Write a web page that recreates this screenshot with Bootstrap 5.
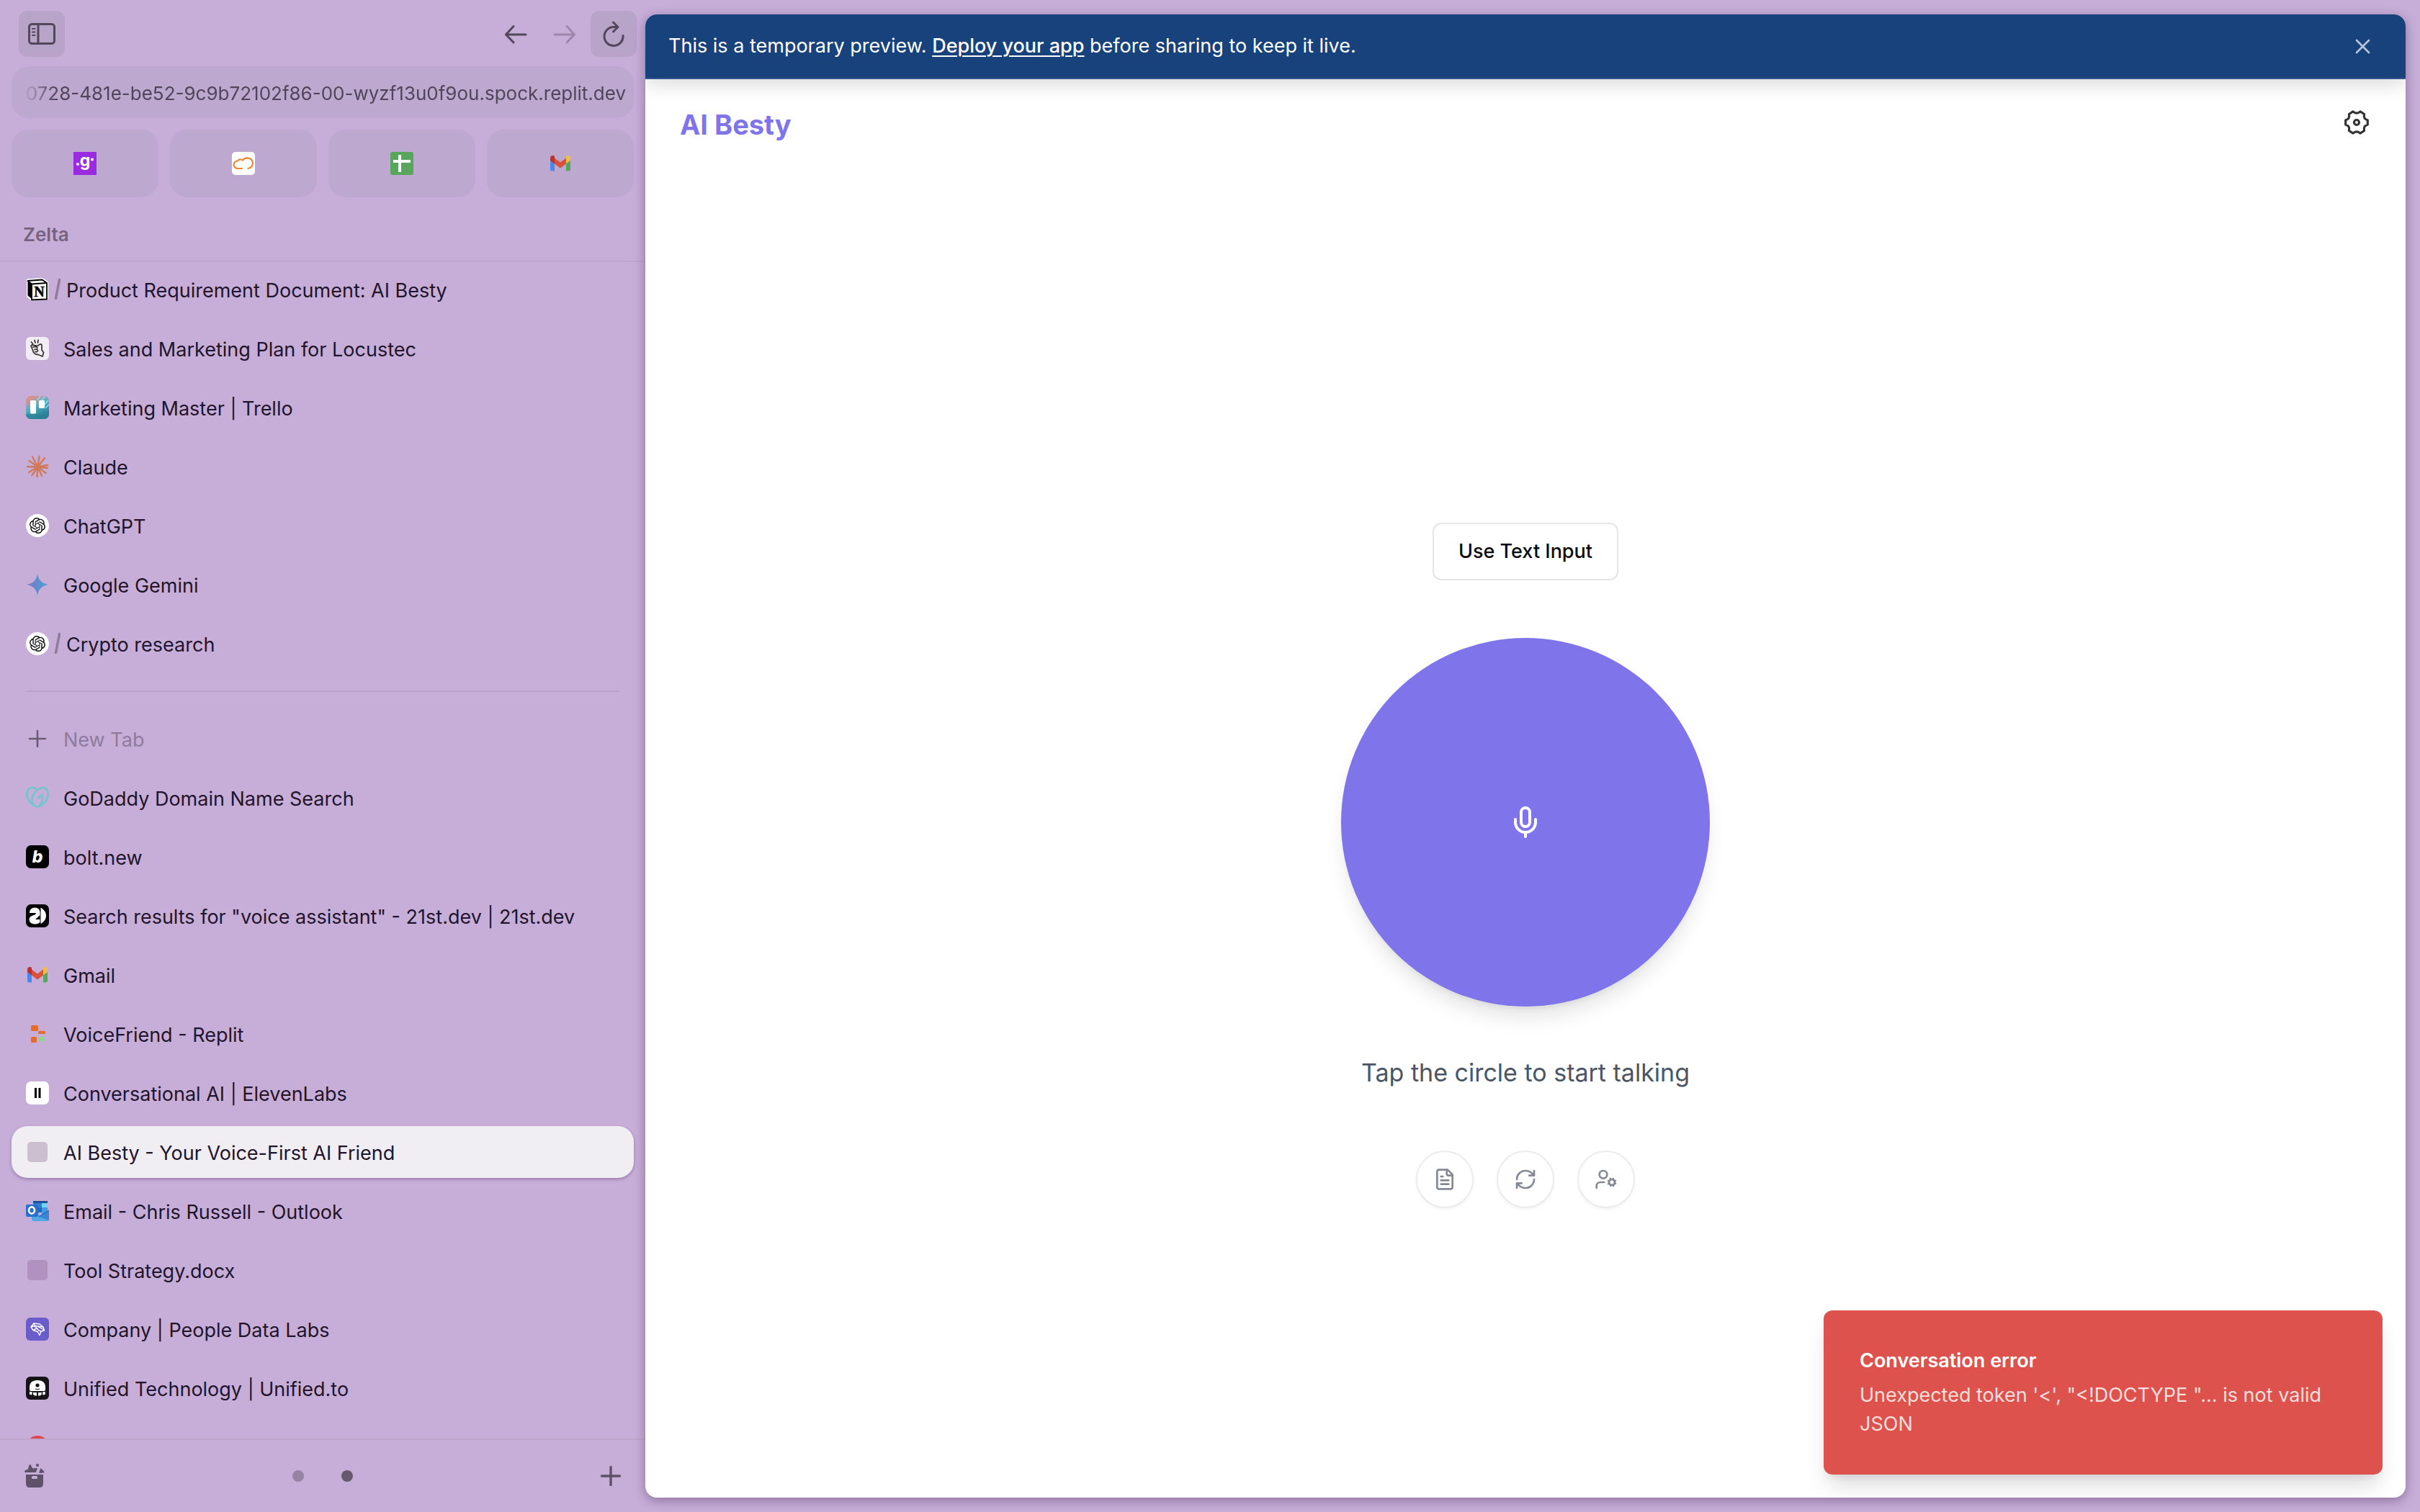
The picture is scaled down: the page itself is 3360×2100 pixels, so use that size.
<!DOCTYPE html>
<html lang="en">
<head>
<meta charset="utf-8">
<meta name="viewport" content="width=device-width, initial-scale=1">
<title>AI Besty - Your Voice-First AI Friend</title>
<link href="https://cdn.jsdelivr.net/npm/bootstrap@5.3.0/dist/css/bootstrap.min.css" rel="stylesheet">
<style>
  body { font-family: Inter, "Liberation Sans", sans-serif; font-size: 27px; line-height: 40px; color: #22142a; background: #c7aed9; }
  button, input { font: inherit; color: inherit; }
  svg { display: block; flex: none; }
  .shell { height: 100vh; }

  /* Browser sidebar */
  .side { flex: 0 0 896px; min-width: 0; }
  .side-tools { padding: 15px 12px 13px 26px; height: 92px; }
  .tool { width: 64px; height: 64px; border: 0; border-radius: 12px; background: transparent; color: #53475b; padding: 0; }
  .tool.filled { background: #b8a3c9; }
  .tool.faded { color: #9d87ab; }
  .side-pad { padding: 0 16px; }
  .address { height: 72px; border-radius: 24px; background: #bda8cf; }
  .address input { width: 100%; height: 72px; border: 0; outline: 0; background: transparent; text-align: right; padding: 2px 11px 0 0; font-size: 26px; color: #51455b;
    -webkit-mask-image: linear-gradient(to right, transparent 16px, #000 60px); mask-image: linear-gradient(to right, transparent 16px, #000 60px); }
  .pins { gap: 16px; padding-top: 16px; }
  .pin { flex: 1 1 0; height: 94px; border-radius: 24px; background: #bda8cf; }
  .space-name { height: 88px; padding: 16px 32px 0; font-size: 26px; font-weight: 600; color: #74637f; }
  .tabs { border-top: 2px solid #bca6cc; border-bottom: 2px solid #bca6cc; flex: 1 1 0; min-height: 0; overflow: hidden; padding: 2px 16px 0; }
  .tab-list { display: grid; gap: 10px; }
  .tab-row { height: 72px; padding: 0 20px; border-radius: 22px; color: #22142a; text-decoration: none; white-space: nowrap; }
  .tab-row span { margin-left: 20px; padding-top: 3px; }
  .tab-row .slash + span { margin-left: 7px; }
  .slash { margin-left: 7px; }
  .tab-row.current { background: #f0edf3; box-shadow: 0 2px 4px rgba(60, 30, 80, .35); }
  .tab-row.new { color: #8f7b9b; }
  .tab-split { height: 2px; margin: 29px 20px; background: #b9a2ca; }
  .side-foot { height: 100px; padding: 0 28px; }
  .foot-btn { border: 0; background: transparent; padding: 0; width: 40px; height: 40px; color: #5f5268; }
  .dots { gap: 52px; }
  .dots button { width: 16px; height: 16px; border: 0; border-radius: 50%; padding: 0; background: #9783a4; }
  .dots .on { background: #65586f; }

  /* Web page */
  .view { flex: 1 1 0; min-width: 0; margin: 20px 20px 20px 0; border-radius: 16px; background: #fff; overflow: hidden; box-shadow: 0 4px 16px rgba(50, 25, 70, .4); }
  .banner { height: 90px; padding: 0 42px 0 32px; background: #18427c; border-bottom: 2px solid #2f5290; color: #fff; box-shadow: 0 8px 24px rgba(0, 0, 0, .14); }
  .banner a { color: #fff; font-weight: 500; text-decoration: underline; text-decoration-thickness: 2px; text-underline-offset: 4px; }
  .ghost { border: 0; background: transparent; padding: 0; width: 36px; height: 36px; color: #b9c6da; }
  .app-head { height: 120px; padding: 0 46px 0 48px; }
  .brand { font-size: 38px; font-weight: 700; line-height: 56px; color: #7f74e9; margin: 0; padding-top: 6px; }
  .gear { width: 44px; height: 44px; color: #333; border: 0; background: transparent; padding: 2px; }
  .stage { padding-top: 94px; }
  .text-btn { height: 80px; padding: 0 34px; border: 2px solid #e5e5e5; border-radius: 12px; background: #fff; color: #0b0b0b; font-weight: 500; }
  .orb { width: 512px; height: 512px; margin-top: 80px; border: 0; border-radius: 50%; background: #7f74e9; color: #fff; box-shadow: 0 20px 30px -6px rgba(0, 0, 0, .11), 0 8px 12px -8px rgba(0, 0, 0, .1); }
  .hint { margin: 64px 0 80px; font-size: 34px; line-height: 56px; color: #4b5563; }
  .round-row { gap: 32px; }
  .round-btn { width: 80px; height: 80px; border: 2px solid #ececec; border-radius: 50%; background: #fff; color: #848a94; padding: 0; box-shadow: 0 2px 4px rgba(0, 0, 0, .05); }
  .alert-box { position: absolute; right: 32px; bottom: 32px; width: 776px; padding: 50px; border-radius: 12px; background: #dd524c; color: #fff; box-shadow: 0 20px 30px -6px rgba(0, 0, 0, .15), 0 8px 12px -8px rgba(0, 0, 0, .1); }
  .alert-box strong { display: block; font-weight: 600; margin-bottom: 8px; }
  .alert-box p { margin: 0; color: #f9dedd; }
</style>
<script src="https://cdn.jsdelivr.net/npm/bootstrap@5.3.0/dist/js/bootstrap.bundle.min.js"></script>
</head>
<body>
<svg width="0" height="0" class="position-absolute" aria-hidden="true">
  <defs>
    <linearGradient id="gem"><stop offset="0" stop-color="#8575bd"/><stop offset="1" stop-color="#3fa3dc"/></linearGradient>
    <linearGradient id="tre" x1="0" y1="0" x2=".5" y2="1"><stop offset="0" stop-color="#f08c68"/><stop offset=".3" stop-color="#b99aa8"/><stop offset=".5" stop-color="#52b5c6"/><stop offset="1" stop-color="#257d92"/></linearGradient>
    <symbol id="i-gmail" viewBox="0 0 32 32">
      <path d="M2 9v15.500q0 2 2 2h4V14z" fill="#4b87f0"/><path d="M30 9v15.500q0 2-2 2h-4V14z" fill="#55a65a"/>
      <path d="M8 8.500l8 6 8-6v8l-8 6-8-6z" fill="#d9503f"/>
      <path d="M2 9q0-4 3.500-4Q7 5 8 6v10.500L2 12z" fill="#b8332c"/><path d="M30 9q0-4-3.500-4Q25 5 24 6v10.500l6-4.500z" fill="#f2bd42"/>
    </symbol>
    <symbol id="i-gpt" viewBox="0 0 32 32">
      <circle cx="16" cy="16" r="16" fill="#fff"/>
      <g transform="translate(5 5) scale(.917)"><path fill="#111" d="M22.282 9.821a5.985 5.985 0 0 0-.516-4.910 6.046 6.046 0 0 0-6.510-2.900A6.065 6.065 0 0 0 4.981 4.182a5.985 5.985 0 0 0-3.998 2.900 6.046 6.046 0 0 0 .743 7.097 5.980 5.980 0 0 0 .510 4.911 6.051 6.051 0 0 0 6.515 2.900A5.985 5.985 0 0 0 13.260 24a6.056 6.056 0 0 0 5.772-4.206 5.990 5.990 0 0 0 3.998-2.900 6.056 6.056 0 0 0-.747-7.073zM13.260 22.430a4.476 4.476 0 0 1-2.876-1.040l.141-.081 4.779-2.758a.795.795 0 0 0 .393-.681v-6.737l2.020 1.169a.071.071 0 0 1 .038.052v5.583a4.504 4.504 0 0 1-4.495 4.493zM3.600 18.304a4.471 4.471 0 0 1-.535-3.014l.142.085 4.783 2.759a.771.771 0 0 0 .781 0l5.843-3.369v2.332a.080.080 0 0 1-.033.062L9.740 19.950a4.500 4.500 0 0 1-6.140-1.646zM2.341 7.896a4.485 4.485 0 0 1 2.366-1.973V11.600a.766.766 0 0 0 .388.676l5.814 3.355-2.020 1.168a.076.076 0 0 1-.071 0l-4.830-2.786A4.504 4.504 0 0 1 2.341 7.872zm16.596 3.856l-5.833-3.387L15.119 7.200a.076.076 0 0 1 .071 0l4.830 2.791a4.494 4.494 0 0 1-.676 8.105v-5.678a.790.790 0 0 0-.407-.667zm2.010-3.023l-.141-.085-4.774-2.782a.776.776 0 0 0-.785 0L9.409 9.230V6.897a.066.066 0 0 1 .028-.061l4.830-2.787a4.500 4.500 0 0 1 6.680 4.660zm-12.640 4.135l-2.020-1.164a.080.080 0 0 1-.038-.057V6.075a4.500 4.500 0 0 1 7.375-3.453l-.142.080L8.704 5.460a.795.795 0 0 0-.393.681zm1.097-2.365l2.602-1.500 2.607 1.500v2.999l-2.597 1.500-2.607-1.500z"/></g>
    </symbol>
    <symbol id="i-slash" viewBox="0 0 10 32"><path d="M7.500 2.500L2.500 28.500" stroke="#8f7b9b" stroke-width="3.500" stroke-linecap="round"/></symbol>
    <symbol id="i-blank" viewBox="0 0 32 32"><rect x="2" y="2" width="28" height="28" rx="5" fill="currentColor"/></symbol>
  </defs>
</svg>

<div class="shell d-flex overflow-hidden">
  <aside class="side d-flex flex-column">
    <div class="side-tools d-flex align-items-center">
      <button class="tool filled d-flex align-items-center justify-content-center me-auto" type="button" aria-label="Toggle sidebar">
        <svg width="40" height="32" viewBox="0 0 40 32" fill="none" stroke="currentColor" stroke-width="3"><rect x="2.500" y="2.500" width="35" height="27" rx="4"/><path d="M15 3v26"/><path d="M7 9h3.500M7 13.500h3.500M7 18h3.500" stroke-width="2" stroke-linecap="round"/></svg>
      </button>
      <button class="tool d-flex align-items-center justify-content-center" type="button" aria-label="Back">
        <svg width="32" height="28" viewBox="0 0 32 28" fill="none" stroke="currentColor" stroke-width="3" stroke-linecap="round" stroke-linejoin="round"><path d="M30 15H2.500M13 3.500L2.500 15 13 26"/></svg>
      </button>
      <button class="tool faded d-flex align-items-center justify-content-center mx-1" type="button" aria-label="Forward">
        <svg width="32" height="28" viewBox="0 0 32 28" fill="none" stroke="currentColor" stroke-width="3" stroke-linecap="round" stroke-linejoin="round"><path d="M2 15h27.500M19 3.500L29.500 15 19 26"/></svg>
      </button>
      <button class="tool filled d-flex align-items-center justify-content-center" type="button" aria-label="Reload">
        <svg width="32" height="36" viewBox="0 0 32 36" fill="none" stroke="currentColor" stroke-width="3" stroke-linecap="round" stroke-linejoin="round"><path d="M29 20.500A13 13 0 1 1 16 8.500h5.500M15.500 2l6.500 6.500-6.500 6.500"/></svg>
      </button>
    </div>
    <div class="side-pad">
      <div class="address"><input type="text" aria-label="Address" readonly value="0728-481e-be52-9c9b72102f86-00-wyzf13u0f9ou.spock.replit.dev"></div>
      <div class="pins d-flex">
        <a class="pin d-flex align-items-center justify-content-center" href="#" aria-label="G workspace">
          <svg width="32" height="32" viewBox="0 0 32 32"><path d="M0 0h32v32H0z" fill="#9a2be0"/><text x="16" y="20" font-family="Inter" font-size="23" font-weight="700" fill="#fff" text-anchor="middle">g</text><circle cx="6" cy="17" r="2" fill="#fff"/><circle cx="26" cy="10.500" r="2" fill="#fff"/></svg>
        </a>
        <a class="pin d-flex align-items-center justify-content-center" href="#" aria-label="Cloud console">
          <svg width="32" height="32" viewBox="0 0 32 32"><rect width="32" height="32" rx="5" fill="#fff"/><path d="M14 23H8q-5-.5-5.500-5 0-5 5.500-5.500 1.500-2.500 4.500-2 1.500 0 2.500 1 2-3 6-3.200 7 .2 8 7 .2 6-6.500 7.700" fill="none" stroke="#ee8533" stroke-width="2.200" stroke-linecap="round"/></svg>
        </a>
        <a class="pin d-flex align-items-center justify-content-center" href="#" aria-label="Sheets">
          <svg width="32" height="32" viewBox="0 0 32 32"><rect width="32" height="32" rx="3" fill="#58a65c"/><path d="M4 11h24v4H4zM11 4h4v24h-4z" fill="#fff"/></svg>
        </a>
        <a class="pin d-flex align-items-center justify-content-center" href="#" aria-label="Gmail pinned">
          <svg width="32" height="32"><use href="#i-gmail"/></svg>
        </a>
      </div>
    </div>
    <div class="space-name d-flex align-items-center">Zelta</div>

    <nav class="tabs" aria-label="Tabs">
      <div class="tab-list">
        <a class="tab-row d-flex align-items-center" href="#">
          <svg width="32" height="32" viewBox="0 0 32 32"><path d="M1 1.500L23 0l8 5.500v24L8 32l-7-6z" fill="#fff"/><path d="M2.500 4.500l6 4v21l-6-5z"/><path d="M2.500 4l20-1.500L29 7v22.500L8 30.500V8.500z" fill="none" stroke="#000" stroke-width="1.800" stroke-linejoin="round"/><path d="M8 8.500L29 7" stroke="#000" stroke-width="1.800"/><text x="18.500" y="25.500" font-family="Liberation Serif" font-size="20" font-weight="700" text-anchor="middle" stroke="#000" stroke-width=".6">N</text></svg>
          <svg class="slash" width="10" height="32"><use href="#i-slash"/></svg><span>Product Requirement Document: AI Besty</span></a>
        <a class="tab-row d-flex align-items-center" href="#">
          <svg width="32" height="32" viewBox="0 0 32 32"><rect width="32" height="32" rx="6" fill="#f2edf5"/><path d="M7.500 7l2 2.500M12 4.500l1 3.500M17 4.500l-.5 3.500M8 14.500q-2-2 .5-3.500l7 1.500 4.500-2.500q2.500 0 2 3v5l2.500 3.500-1.500 5.500-6-2.500q-6-.5-7-4.500-1-3-2-5.500zM10 14q4-1 6 1M12 17.500q3-1.500 4.500 1-.5 3-3.500 2" fill="none" stroke="#3a3735" stroke-width="1.800" stroke-linecap="round" stroke-linejoin="round"/></svg>
          <span>Sales and Marketing Plan for Locustec</span></a>
        <a class="tab-row d-flex align-items-center" href="#">
          <svg width="32" height="32" viewBox="0 0 32 32"><rect width="32" height="32" rx="7" fill="url(#tre)"/><path d="M16 6L20 0M22 6l4-5.500M26 12l5-6M27 17l5-5" stroke="#8fdfe8" stroke-width="1.500"/><path d="M0 25h32v0q0 7-7 7H7q-7 0-7-7z" fill="#2f8296" opacity=".7"/><rect x="6" y="6" width="8" height="18.500" rx="1.500" fill="#fff"/><rect x="18" y="6" width="8" height="11" rx="1.500" fill="#fff"/></svg>
          <span>Marketing Master | Trello</span></a>
        <a class="tab-row d-flex align-items-center" href="#">
          <svg width="32" height="32" viewBox="0 0 32 32" stroke="#cf7a5c" stroke-width="2.400" stroke-linecap="round"><path d="M16.500 16.500L9 2.500M16.500 16.500L18.500 2M16.500 16.500L26 4M16.500 16.500L30 14M16.500 16.500L30 18M16.500 16.500L27.500 25M16.500 16.500L22 29M16.500 16.500L15.500 30M16.500 16.500L8.500 28M16.500 16.500L4 24M16.500 16.500L2 16M16.500 16.500L4.500 8"/><circle cx="16.500" cy="16.500" r="3" fill="#cf7a5c"/></svg>
          <span>Claude</span></a>
        <a class="tab-row d-flex align-items-center" href="#"><svg width="32" height="32"><use href="#i-gpt"/></svg><span>ChatGPT</span></a>
        <a class="tab-row d-flex align-items-center" href="#">
          <svg width="32" height="32" viewBox="0 0 32 32"><path d="M16 1q2 13 15 15-13 2-15 15-2-13-15-15 13-2 15-15z" fill="url(#gem)"/></svg>
          <span>Google Gemini</span></a>
        <a class="tab-row d-flex align-items-center" href="#"><svg width="32" height="32"><use href="#i-gpt"/></svg><svg class="slash" width="10" height="32"><use href="#i-slash"/></svg><span>Crypto research</span></a>
      </div>
      <div class="tab-split"></div>
      <div class="tab-list">
        <a class="tab-row new d-flex align-items-center" href="#">
          <svg width="32" height="32" viewBox="0 0 32 32"><path d="M16 5v22M5 16h22" stroke="#6b5c76" stroke-width="2.600" stroke-linecap="round"/></svg>
          <span>New Tab</span></a>
        <a class="tab-row d-flex align-items-center" href="#">
          <svg width="32" height="32" viewBox="0 0 32 32" fill="none" stroke="#75c4cf" stroke-width="2.800" stroke-linecap="round" stroke-linejoin="round"><path d="M16 5Q9-.5 4 3.500-.5 9 2.500 17 6.500 26 16 28.500 25.500 26 29.500 17 32.500 9 28 3.500 22.500-.5 16 5 8 11.500 8.500 20q.500 5 4 7.500M23 12l-6 4M23 12q.5 9-4 15"/></svg>
          <span>GoDaddy Domain Name Search</span></a>
        <a class="tab-row d-flex align-items-center" href="#">
          <svg width="32" height="32" viewBox="0 0 32 32"><rect width="32" height="32" rx="7"/><text x="16" y="23.500" font-family="Inter" font-size="23" font-weight="800" font-style="italic" fill="#fff" text-anchor="middle">b</text></svg>
          <span>bolt.new</span></a>
        <a class="tab-row d-flex align-items-center" href="#">
          <svg width="32" height="32" viewBox="0 0 32 32"><rect width="32" height="32" rx="7"/><path d="M5 12Q5 5 12 4.500q7 0 7.500 6v14q-1.500 3-7 3Q5 27 4.500 21q0-4 5-5.500 4-1 4.500-3.500H5z" fill="#fff"/><path d="M20.500 4.500Q28 9 28 16t-7.500 11z" fill="#fff"/><path d="M13 21h6.500v-6z"/></svg>
          <span>Search results for "voice assistant" - 21st.dev | 21st.dev</span></a>
        <a class="tab-row d-flex align-items-center" href="#"><svg width="32" height="32"><use href="#i-gmail"/></svg><span>Gmail</span></a>
        <a class="tab-row d-flex align-items-center" href="#">
          <svg width="32" height="32" viewBox="0 0 32 32" fill="#e66c2c"><rect x="7" y="4" width="10" height="8" rx="1.500"/><rect x="17" y="12" width="10" height="4" rx="1"/><rect x="7" y="20" width="8" height="8" rx="1.500"/><circle cx="22" cy="23" r="4" fill="#8fd58c"/></svg>
          <span>VoiceFriend - Replit</span></a>
        <a class="tab-row d-flex align-items-center" href="#">
          <svg width="32" height="32" viewBox="0 0 32 32"><rect width="32" height="32" rx="7" fill="#fff"/><path d="M12 9h3v14h-3zM17.500 9h3v14h-3z"/></svg>
          <span>Conversational AI | ElevenLabs</span></a>
        <a class="tab-row current d-flex align-items-center" href="#" aria-current="page"><svg width="32" height="32" color="#ccbfd0"><use href="#i-blank"/></svg><span>AI Besty - Your Voice-First AI Friend</span></a>
        <a class="tab-row d-flex align-items-center" href="#">
          <svg width="32" height="32" viewBox="0 0 32 32"><path d="M10 2h20v14H10z" fill="#2f7fd3"/><path d="M10 2h20v3H10z" fill="#1f4f94"/><path d="M22 5h8v6h-8z" fill="#74d2f7"/><path d="M14 11h8v7h-8z" fill="#2766b8"/><path d="M22 11h8v5l-8 5z" fill="#3f9be6"/><path d="M32 15v12q0 3-3 3H11q-3 0-3-3V17l12 5z" fill="#4fa8e8"/><path d="M32 15L18 24l14 5z" fill="#3a86d6"/><path d="M18 24l14-9" stroke="#1e5597" stroke-width="1"/><rect y="7" width="17" height="17" rx="2" fill="#2a6fc9"/><ellipse cx="8" cy="15" rx="4" ry="4.600" fill="none" stroke="#fff" stroke-width="2.600"/></svg>
          <span>Email - Chris Russell - Outlook</span></a>
        <a class="tab-row d-flex align-items-center" href="#"><svg width="32" height="32" color="#b091bf"><use href="#i-blank"/></svg><span>Tool Strategy.docx</span></a>
        <a class="tab-row d-flex align-items-center" href="#">
          <svg width="32" height="32" viewBox="0 0 32 32"><rect width="32" height="32" rx="6" fill="#6a5ccb"/><path d="M7 13l4-5 8 1 5 4 1.500 5-4.500 1-2 5.500-3-5-6-2zM7 13l5-1.500L24 13M12 11.500l-.5-3M12 11.500l6 6.500 3 1M10 17.500l5-2.500M16 12l9 5" fill="none" stroke="#fff" stroke-width="1.400" stroke-linejoin="round"/></svg>
          <span>Company | People Data Labs</span></a>
        <a class="tab-row d-flex align-items-center" href="#">
          <svg width="32" height="32" viewBox="0 0 32 32"><rect width="32" height="32" rx="6" fill="#151419"/><path d="M5 15Q5 5 16 5t11 10v3q0 2-3 2H8q-3 0-3-2z" fill="#fff"/><path d="M5 21l4 .5-1 4-3-1zM10 22h5v4.500q-4 .5-5-2zM17 22h5l-.500 3q-2 2-4.500 1.500zM23 21.500l4-.5-.5 4-3 .5z" fill="#fff"/><circle cx="16" cy="12" r="2.600" fill="#151419"/><path d="M13 17q3 1.500 6 0" fill="none" stroke="#151419" stroke-width="1.200"/></svg>
          <span>Unified Technology | Unified.to</span></a>
        <a class="tab-row d-flex align-items-center" href="#" aria-label="More tabs">
          <svg width="32" height="32" viewBox="0 0 32 32"><circle cx="16" cy="16" r="16" fill="#e0454c"/><circle cx="16" cy="16" r="11" fill="none" stroke="#f3a9ae" stroke-width="2"/></svg></a>
      </div>
    </nav>

    <div class="side-foot d-flex align-items-center justify-content-between">
      <button class="foot-btn" type="button" aria-label="Archive">
        <svg width="40" height="40" viewBox="0 0 40 40" fill="currentColor"><path d="M8 18h24v12q0 6-5 6H13q-5 0-5-6z"/><rect x="16" y="20" width="8" height="4" rx="1.500" fill="#c7aed9"/><path d="M6 13.500q1-2 5-3l1.500-6q1-1 2 0l3 5 5-.5q2 0 1 2l-2 4H7q-1.500 0-1-1.500z"/><circle cx="24" cy="5" r="2"/><path d="M28.500 9l5 5q.5 1.500-1 1.500l-5 .5q-1.500 0-1-1.500z"/></svg>
      </button>
      <div class="dots d-flex"><button type="button" aria-label="Space 1"></button><button class="on" type="button" aria-label="Space 2"></button></div>
      <button class="foot-btn" type="button" aria-label="New">
        <svg width="40" height="40" viewBox="0 0 40 40"><path d="M20 7.500v25M7.500 20h25" stroke="currentColor" stroke-width="3.400" stroke-linecap="round"/></svg>
      </button>
    </div>
  </aside>

  <main class="view d-flex flex-column position-relative">
    <div class="banner d-flex align-items-center justify-content-between">
      <div>This is a temporary preview. <a href="#">Deploy your app</a> before sharing to keep it live.</div>
      <button class="ghost" type="button" aria-label="Dismiss">
        <svg width="36" height="36" viewBox="0 0 36 36" stroke="currentColor" stroke-width="2.600" stroke-linecap="round"><path d="M10 10l17 17M27 10L10 27"/></svg>
      </button>
    </div>
    <header class="app-head d-flex align-items-center justify-content-between">
      <h1 class="brand">AI Besty</h1>
      <button class="gear" type="button" aria-label="Settings">
        <svg width="40" height="40" viewBox="0 0 40 40" fill="none" stroke="currentColor" stroke-width="3.200" stroke-linejoin="round"><path d="M35.300 16.800Q29 15.500 30.600 8.500L25 4.800Q20 9.500 15 4.800L9.400 8.500Q11 15.500 4.700 16.800V23.200Q11 24.500 9.400 31.500L15 35.200Q20 30.500 25 35.200L30.600 31.500Q29 24.500 35.300 23.200z"/><circle cx="20" cy="20" r="3.500"/></svg>
      </button>
    </header>
    <section class="stage flex-grow-1 d-flex flex-column align-items-center justify-content-center">
      <button class="text-btn" type="button">Use Text Input</button>
      <button class="orb d-flex align-items-center justify-content-center" type="button" aria-label="Start talking">
        <svg width="48" height="48" viewBox="0 0 24 24" fill="none" stroke="currentColor" stroke-width="2" stroke-linecap="round" stroke-linejoin="round"><path d="M12 2a3 3 0 0 0-3 3v7a3 3 0 0 0 6 0V5a3 3 0 0 0-3-3Z"/><path d="M19 10v2a7 7 0 0 1-14 0v-2M12 19v3"/></svg>
      </button>
      <p class="hint">Tap the circle to start talking</p>
      <div class="round-row d-flex">
        <button class="round-btn d-flex align-items-center justify-content-center" type="button" aria-label="Transcript">
          <svg width="32" height="32" viewBox="0 0 24 24" fill="none" stroke="currentColor" stroke-width="2" stroke-linecap="round" stroke-linejoin="round"><path d="M15 2H6a2 2 0 0 0-2 2v16a2 2 0 0 0 2 2h12a2 2 0 0 0 2-2V7Z"/><path d="M14 2v4a2 2 0 0 0 2 2h4M10 9H8M16 13H8M16 17H8"/></svg>
        </button>
        <button class="round-btn d-flex align-items-center justify-content-center" type="button" aria-label="Reset">
          <svg width="32" height="32" viewBox="0 0 24 24" fill="none" stroke="currentColor" stroke-width="2" stroke-linecap="round" stroke-linejoin="round"><path d="M3 12a9 9 0 0 1 9-9 9.750 9.750 0 0 1 6.740 2.740L21 8M21 3v5h-5M21 12a9 9 0 0 1-9 9 9.750 9.750 0 0 1-6.740-2.740L3 16M8 16H3v5"/></svg>
        </button>
        <button class="round-btn d-flex align-items-center justify-content-center" type="button" aria-label="Profile settings">
          <svg width="32" height="32" viewBox="0 0 24 24" fill="none" stroke="currentColor" stroke-width="2" stroke-linecap="round" stroke-linejoin="round"><circle cx="18" cy="15" r="3"/><circle cx="9" cy="7" r="4"/><path d="M10 15H6a4 4 0 0 0-4 4v2M21.700 16.400l-.9-.3M15.200 13.900l-.9-.3M16.600 18.700l.3-.9M19.100 12.200l.3-.9M19.600 18.700l-.4-1M16.800 12.300l-.4-1M14.300 16.600l1-.4M20.700 13.800l1-.4"/></svg>
        </button>
      </div>
    </section>
    <div class="alert-box" role="alert">
      <strong>Conversation error</strong>
      <p>Unexpected token '&lt;', "&lt;!DOCTYPE "... is not valid JSON</p>
    </div>
  </main>
</div>
</body>
</html>
